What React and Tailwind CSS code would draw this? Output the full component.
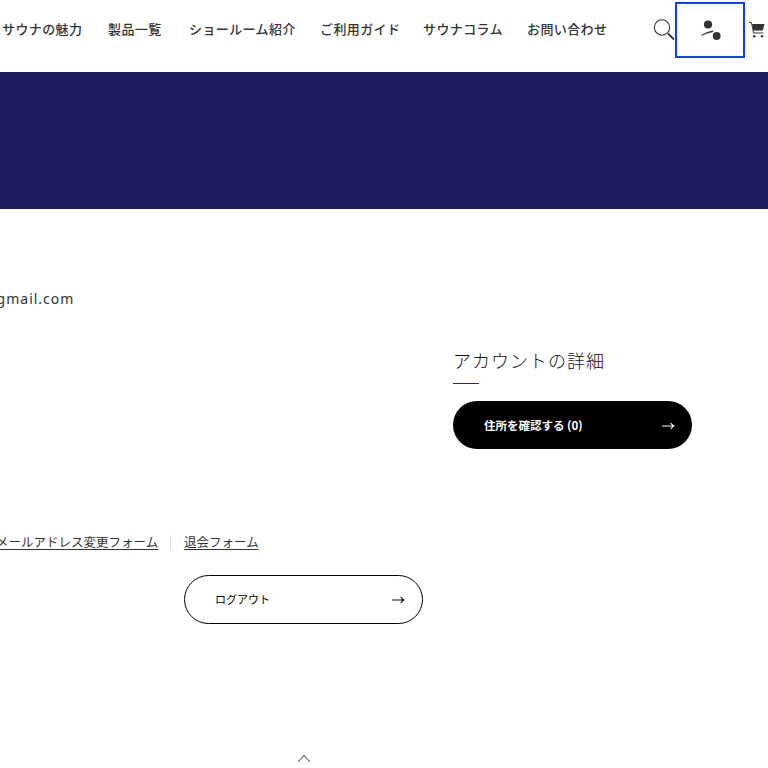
const NAV = [
  ["サウナの魅力", "w-[80px]"],
  ["製品一覧", "w-[55px]"],
  ["ショールーム紹介", "w-[105px]"],
  ["ご利用ガイド", "w-[77px]"],
  ["サウナコラム", "w-[78px]"],
  ["お問い合わせ", "w-[82px]"],
];

function Arrow({ color }) {
  return (
    <svg width="14" height="10" viewBox="0 0 14 10" fill="none" stroke={color} strokeWidth="1.1">
      <path d="M1 5H12.5M9.5 2.2L12.8 5L9.5 7.8" />
    </svg>
  );
}

export default function App() {
  return (
    <div className="w-[768px] h-[768px] overflow-hidden bg-white text-[#222] font-['Noto_Sans_CJK_JP','Noto_Sans',sans-serif]">
      <header className="h-[72px] flex items-start whitespace-nowrap">
        <nav className="flex gap-[26px] pl-[2px] pt-[19px] text-[13px] leading-[19px] tracking-[0.4px] font-medium text-[#333]">
          {NAV.map(([label, w]) => (
            <a key={label} className={`block ${w}`}>{label}</a>
          ))}
        </nav>
        <svg className="ml-[44px] mt-[19px] shrink-0" width="22" height="22" viewBox="0 0 22 22" fill="none" stroke="#333">
          <circle cx="9" cy="8.5" r="7.7" strokeWidth="1.1" />
          <path d="M15 14.5L21 20.5" strokeWidth="1.8" />
        </svg>
        <div className="mt-[2px] w-[70px] h-[56px] shrink-0 border-2 border-[#0f3fff] flex items-start justify-start">
          <svg className="ml-[22px] mt-[15px]" width="24" height="24" viewBox="0 0 24 24" fill="#333">
            <circle cx="9" cy="5.5" r="4.1" />
            <path d="M2 16.3C5 14.2 9 12.6 14 11.6L14.3 12.9C10 13.6 6 15 2.4 16.8Z" />
            <circle cx="17.7" cy="17" r="3.9" />
          </svg>
        </div>
        <svg className="ml-[3px] mt-[21px] shrink-0" width="18" height="17" viewBox="0 0 18 17" fill="#333">
          <path d="M4 3H16.5L14.8 9.5H5.3Z" />
          <path d="M1 1.4H3.4L5.6 12H15.2" fill="none" stroke="#333" strokeWidth="1" />
          <circle cx="6.2" cy="15.2" r="1.2" />
          <circle cx="14" cy="15.2" r="1.2" />
        </svg>
      </header>

      <div className="h-[137px] bg-[#1c1b60]" />

      <main>
        <p className="mt-[80px] -ml-[17px] text-[14px] leading-[20px] tracking-[1px] text-[#333] whitespace-nowrap font-['Noto_Sans','Noto_Sans_CJK_JP',sans-serif]">
          @gmail.com
        </p>

        <div className="flex mt-[39px]">
          <div className="w-[453px] shrink-0 pt-[185px]">
            <div className="flex items-center -ml-[4px] text-[12.5px] leading-[18px] text-[#333] whitespace-nowrap">
              <a className="underline underline-offset-2 w-[162px]">メールアドレス変更フォーム</a>
              <span className="w-px h-[15px] bg-[#ddd] ml-[12px] mr-[13px]" />
              <a className="underline underline-offset-2">退会フォーム</a>
            </div>
            <button className="ml-[184px] mt-[24px] w-[239px] h-[49px] rounded-[25px] border border-black bg-white flex items-center justify-between pl-[30px] pr-[17px] text-[11px] font-normal text-black">
              <span>ログアウト</span>
              <Arrow color="#111" />
            </button>
          </div>

          <div className="w-[240px] shrink-0">
            <h2 className="text-[18px] leading-[24px] tracking-[1px] font-light text-[#111]">アカウントの詳細</h2>
            <div className="w-[26px] h-px bg-[#2a2a78] mt-[11px]" />
            <button className="mt-[17px] w-[239px] h-[48px] rounded-[24px] bg-black flex items-center justify-between pl-[31px] pr-[17px] pt-[2px] text-[11.5px] font-bold text-white">
              <span>住所を確認する (0)</span>
              <Arrow color="#fff" />
            </button>
          </div>
        </div>

        <svg className="ml-[297px] mt-[130px]" width="14" height="9" viewBox="0 0 14 9" fill="none" stroke="#555" strokeWidth="1.1">
          <path d="M1 8L7 1.5L13 8" />
        </svg>
      </main>
    </div>
  );
}
